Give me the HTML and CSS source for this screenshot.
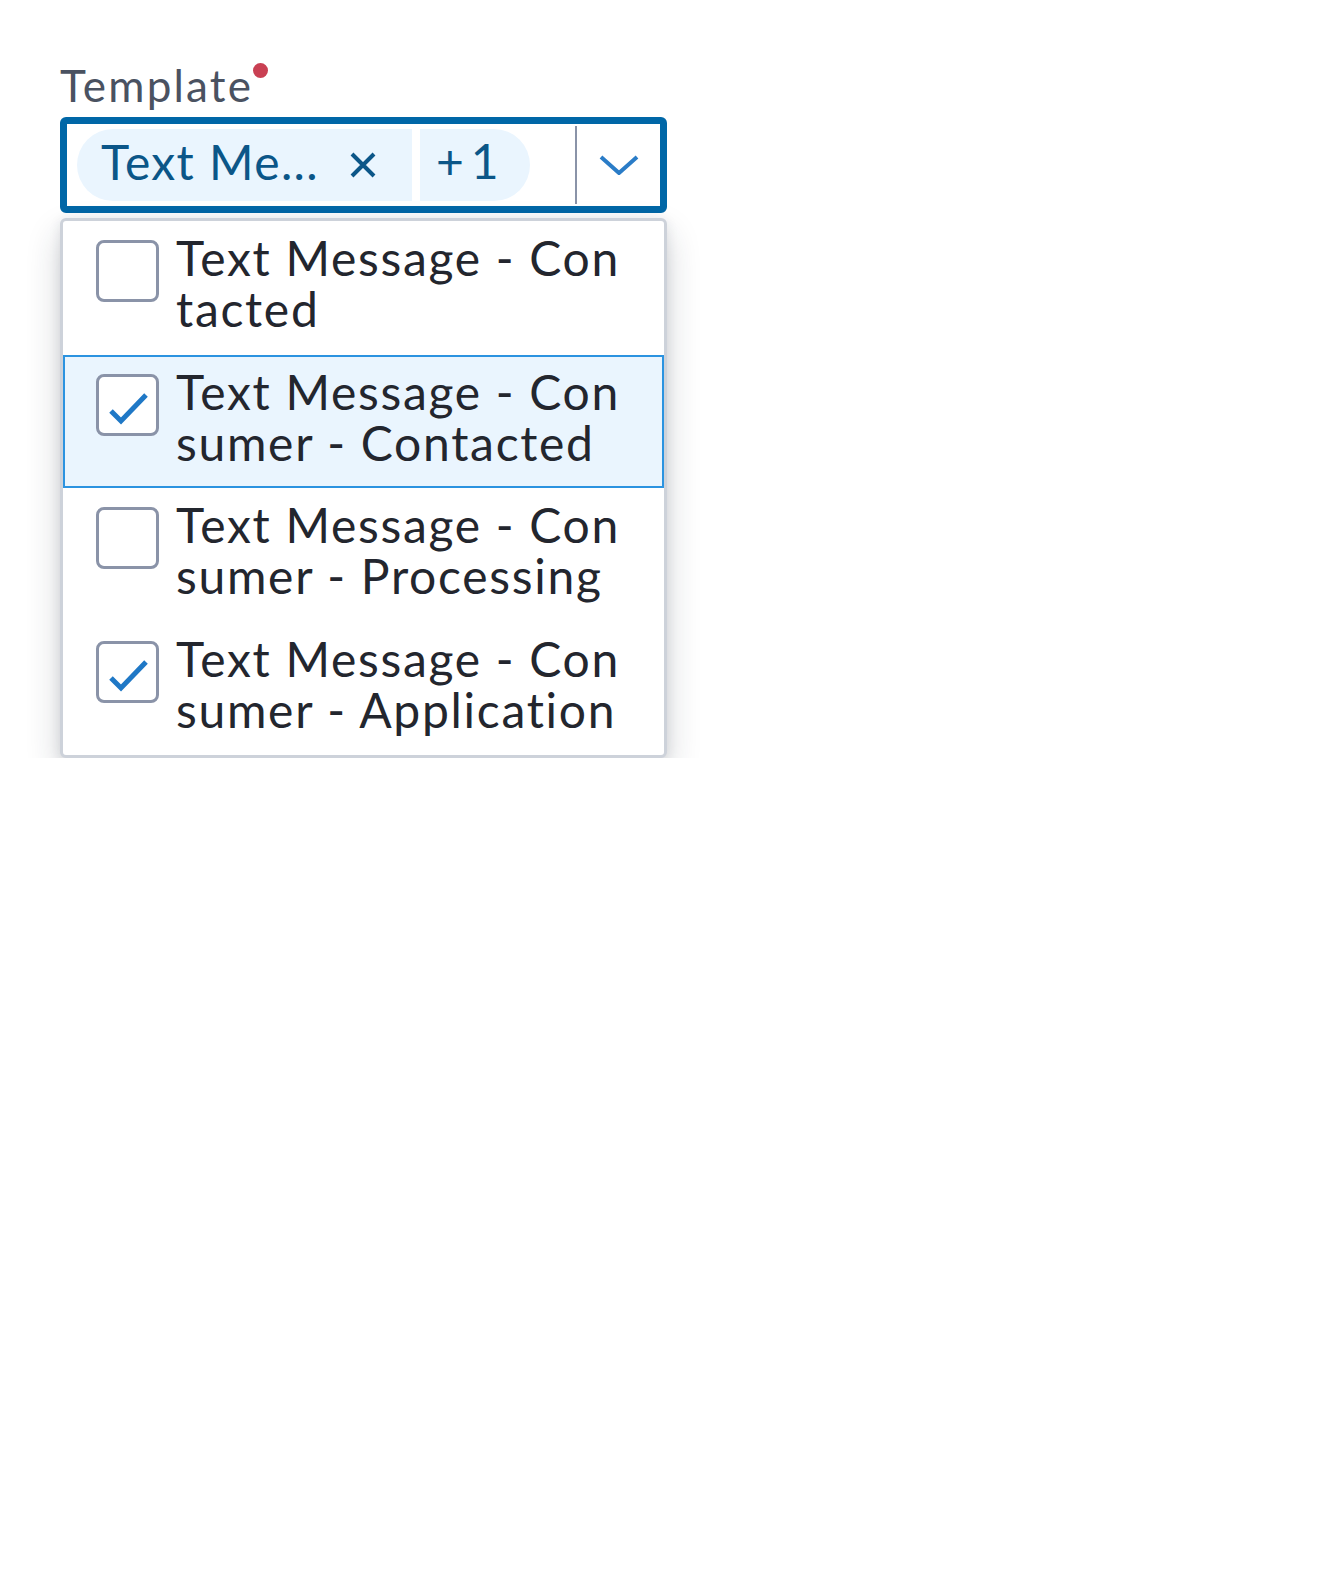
FILE: index.html
```html
<!DOCTYPE html>
<html lang="en">
<head>
<meta charset="utf-8">
<title>Template select</title>
<link rel="stylesheet" href="styles.css">
</head>
<body>
<div class="field">
  <label class="label">Template<span class="req"></span></label>
  <div class="control">
    <div class="chips">
      <div class="chip chip-main" title="Text Message - Consumer - Contacted">
        <span class="chip-text">Text Me...</span>
        <svg class="chip-x" width="26" height="26" viewBox="0 0 26 26"><path d="M2 2 L24 24 M24 2 L2 24" stroke="#0b5688" stroke-width="4" fill="none"/></svg>
      </div>
      <div class="chip chip-more">+1</div>
    </div>
    <div class="sep"></div>
    <div class="arrow">
      <svg width="40" height="20" viewBox="0 0 40 20"><polyline points="2,2 20,18 38,2" stroke="#2a7cc7" stroke-width="4" fill="none"/></svg>
    </div>
  </div>
  <ul class="menu">
    <li class="item">
      <span class="box"></span>
      <span class="item-text">Text Message - Contacted</span>
    </li>
    <li class="item item-active">
      <span class="box"><svg width="56" height="56" viewBox="0 0 56 56"><polyline points="11,34 21,44 46,18" stroke="#1f78c6" stroke-width="5" fill="none"/></svg></span>
      <span class="item-text">Text Message - Consumer - Contacted</span>
    </li>
    <li class="item">
      <span class="box"></span>
      <span class="item-text">Text Message - Consumer - Processing</span>
    </li>
    <li class="item">
      <span class="box"><svg width="56" height="56" viewBox="0 0 56 56"><polyline points="11,34 21,44 46,18" stroke="#1f78c6" stroke-width="5" fill="none"/></svg></span>
      <span class="item-text">Text Message - Consumer - Application</span>
    </li>
  </ul>
</div>
</body>
</html>
```
FILE: styles.css
```css
html, body {
  margin: 0;
  padding: 0;
  background: #ffffff;
}
body {
  font-family: Lato, "Open Sans", sans-serif;
}
.field {
  width: 607px;
  padding: 60px 0 0 60px;
}
.label {
  display: block;
  position: relative;
  width: max-content;
  font-size: 44px;
  line-height: 50px;
  letter-spacing: 2.2px;
  color: #4a5261;
  margin-bottom: 7px;
}
.req {
  position: absolute;
  right: -15px;
  top: 3px;
  width: 15px;
  height: 15px;
  border-radius: 50%;
  background: #c94053;
}
.control {
  box-sizing: border-box;
  height: 96px;
  border: 7.5px solid #0067a7;
  border-radius: 6px;
  display: flex;
  align-items: stretch;
}
.chips {
  flex: 1;
  display: flex;
  align-items: center;
  padding-left: 10px;
  gap: 8px;
  min-width: 0;
}
.chip {
  height: 72px;
  background: #eaf5fe;
  color: #0b5688;
  font-size: 48px;
  display: flex;
  box-sizing: border-box;
}
.chip-main {
  width: 335px;
  border-radius: 36px 0 0 36px;
  padding-left: 24px;
  padding-right: 36px;
  align-items: center;
}
.chip-text {
  flex: 1;
  min-width: 0;
  white-space: nowrap;
  line-height: 60px;
  letter-spacing: 1.4px;
  margin-top: -6px;
}
.chip-x {
  flex: none;
  margin-left: 20px;
}
.chip-more {
  width: 110px;
  border-radius: 0 36px 36px 0;
  padding-left: 16px;
  padding-top: 2px;
  line-height: 60px;
  letter-spacing: 7px;
  white-space: nowrap;
}
.sep {
  width: 2.5px;
  margin: 2px 0;
  background: #8a93a8;
}
.arrow {
  width: 83px;
  display: flex;
  align-items: center;
  justify-content: center;
}
.menu {
  list-style: none;
  margin: 5px 0 0 0;
  padding: 0;
  border: 3px solid #cdd2da;
  border-radius: 6px;
  background: #ffffff;
  box-shadow: 0 16px 34px rgba(30, 38, 56, 0.2), 0 2px 12px rgba(30, 38, 56, 0.1);
}
.item {
  display: flex;
  align-items: flex-start;
  height: 133.5px;
  box-sizing: border-box;
  border: 2px solid transparent;
  padding: 17px 20px 0 31px;
}
.item-active {
  background: #eaf5fe;
  border-color: #2b93e0;
}
.box {
  flex: none;
  width: 63px;
  height: 62px;
  box-sizing: border-box;
  border: 3.5px solid #8a93a8;
  border-radius: 8px;
  background: #ffffff;
  display: flex;
  align-items: center;
  justify-content: center;
}
.item-text {
  margin-left: 17px;
  margin-top: -8px;
  font-size: 48px;
  line-height: 51px;
  letter-spacing: 1.7px;
  color: #23262e;
  word-break: break-all;
  width: 452px;
}
```
